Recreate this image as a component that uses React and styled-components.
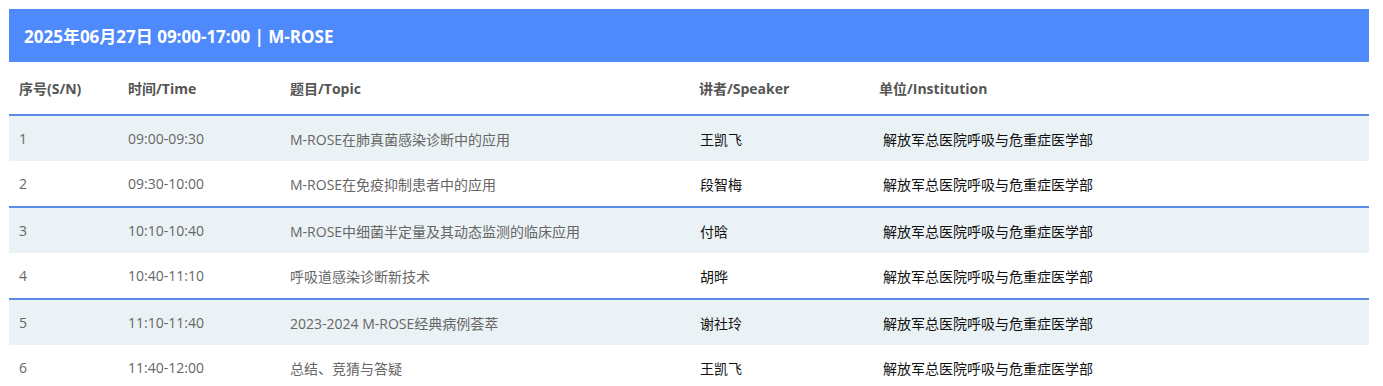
import styled, { createGlobalStyle } from "styled-components";

const GlobalStyle = createGlobalStyle`
  * {
    box-sizing: border-box;
  }

  body {
    margin: 0;
    padding: 9px 14px 0 9px;
    background: #ffffff;
    font-family: "Open Sans", "Noto Sans CJK SC", sans-serif;
  }
`;

const columns = "109px 162px 409px 180px 1fr";

const Panel = styled.section`
  width: 1360px;
`;

const Banner = styled.h2`
  margin: 0;
  height: 53px;
  padding: 0 15px;
  display: flex;
  align-items: center;
  background: #4f8afc;
  color: #ffffff;
  font-size: 17px;
  font-weight: 700;
  font-family: "Open Sans", "Noto Sans CJK SC", sans-serif;
`;

const HeadRow = styled.div`
  display: grid;
  grid-template-columns: ${columns};
  height: 52px;
  align-items: center;
  color: #555555;
  font-size: 14px;
  font-weight: 700;
`;

const Row = styled.div`
  display: grid;
  grid-template-columns: ${columns};
  height: ${(p) => (p.$ruled ? "47px" : "45px")};
  align-items: center;
  border-top: ${(p) => (p.$ruled ? "2px solid #5b8be8" : "none")};
  background: ${(p) => (p.$shaded ? "#ebf2f5" : "#ffffff")};
  font-size: 14px;
  color: #666666;
`;

const Cell = styled.div`
  padding-left: ${(p) => p.$indent || 10}px;
  color: ${(p) => (p.$dark ? "#111111" : "inherit")};
  white-space: nowrap;
`;

const sessions = [
  ["1", "09:00-09:30", "M-ROSE在肺真菌感染诊断中的应用", "王凯飞"],
  ["2", "09:30-10:00", "M-ROSE在免疫抑制患者中的应用", "段智梅"],
  ["3", "10:10-10:40", "M-ROSE中细菌半定量及其动态监测的临床应用", "付晗"],
  ["4", "10:40-11:10", "呼吸道感染诊断新技术", "胡晔"],
  ["5", "11:10-11:40", "2023-2024 M-ROSE经典病例荟萃", "谢社玲"],
  ["6", "11:40-12:00", "总结、竞猜与答疑", "王凯飞"],
];

const institution = "解放军总医院呼吸与危重症医学部";

export default function App() {
  return (
    <>
      <GlobalStyle />
      <Panel>
        <Banner>2025年06月27日 09:00-17:00 | M-ROSE</Banner>
        <HeadRow>
          <Cell>序号(S/N)</Cell>
          <Cell>时间/Time</Cell>
          <Cell>题目/Topic</Cell>
          <Cell>讲者/Speaker</Cell>
          <Cell>单位/Institution</Cell>
        </HeadRow>
        {sessions.map(([no, time, topic, speaker], i) => (
          <Row key={no} $ruled={i % 2 === 0} $shaded={i % 2 === 0}>
            <Cell>{no}</Cell>
            <Cell>{time}</Cell>
            <Cell>{topic}</Cell>
            <Cell $indent={11} $dark>
              {speaker}
            </Cell>
            <Cell $indent={14} $dark>
              {institution}
            </Cell>
          </Row>
        ))}
      </Panel>
    </>
  );
}
